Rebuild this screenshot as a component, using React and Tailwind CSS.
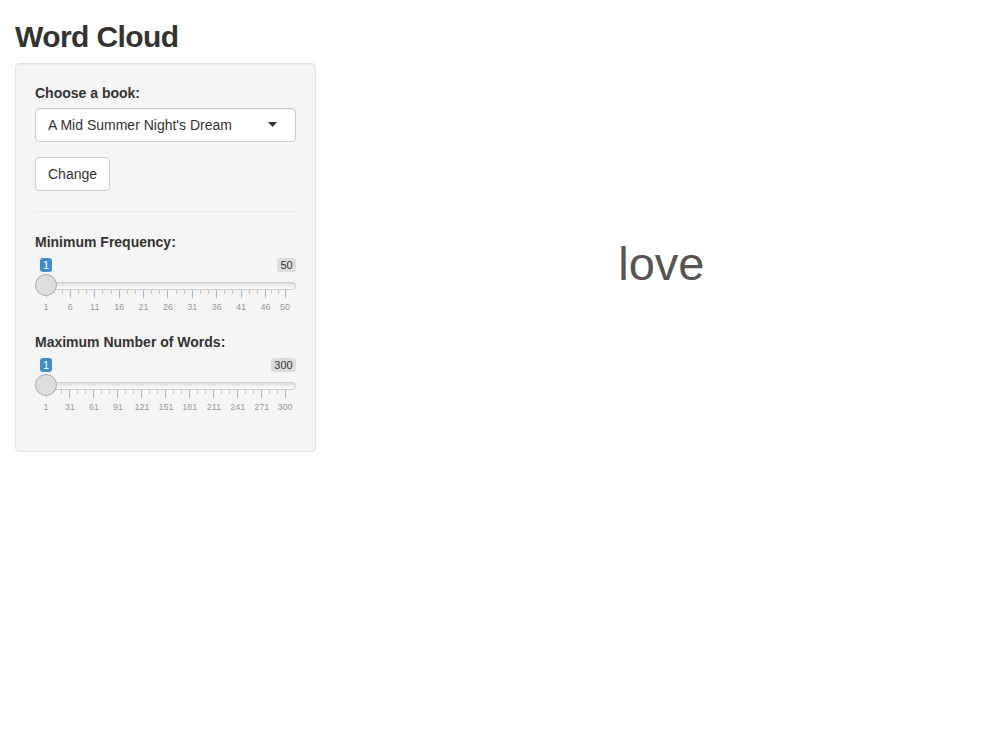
import { useMemo } from "react";

const FONT = { fontFamily: '"Liberation Sans", Arial, Helvetica, sans-serif' };

// handle centre runs from 11px to 250px inside the 261px slider
const TRACK_START = 11;
const TRACK_LEN = 239;

const Slider = ({ min, max, step }) => {
  const pos = (v) => TRACK_START + ((v - min) / (max - min)) * TRACK_LEN;

  const { labels, ticks } = useMemo(() => {
    const vals = [];
    for (let v = min; v < max; v += step) vals.push(v);
    vals.push(max);
    const t = [];
    vals.forEach((v, i) => {
      t.push({ x: pos(v), big: true });
      if (i < vals.length - 1) {
        const a = pos(v);
        const b = pos(vals[i + 1]);
        t.push({ x: a + (b - a) / 3, big: false });
        t.push({ x: a + ((b - a) * 2) / 3, big: false });
      }
    });
    return { labels: vals, ticks: t };
  }, [min, max, step]);

  return (
    <div className="flex h-[60px] flex-col">
      {/* value + max badges */}
      <div className="flex h-[17px] items-start justify-between pt-[1px] text-[11px] leading-[14px]">
        <span className="ml-[5px] rounded-[3px] bg-[#428bca] px-[3px] text-white">
          {min}
        </span>
        <span className="rounded-[3px] bg-[#dcdcdc] px-[3px] text-[#333]">
          {max}
        </span>
      </div>

      {/* track + handle */}
      <div className="relative flex h-[22px] items-center">
        <div className="mt-[2px] h-[8px] w-full rounded-full border border-[#cccccc] bg-gradient-to-b from-[#dedede] to-white" />
        <div
          className="absolute top-0 z-10 h-[22px] w-[22px] rounded-full border border-[#aaaaaa] bg-[#dedede] shadow-[1px_1px_3px_rgba(255,255,255,0.3)]"
          style={{ left: pos(min) - 11 }}
        />
      </div>

      {/* grid */}
      <div className="relative -mt-[6px] h-[27px]">
        {ticks.map((t, i) => (
          <span
            key={i}
            className={
              t.big
                ? "absolute top-0 h-[8px] w-px bg-[#428bca] opacity-50"
                : "absolute top-0 h-[4px] w-px bg-[#999] opacity-50"
            }
            style={{ left: t.x - 0.5 }}
          />
        ))}
        {labels.map((v) => (
          <span
            key={v}
            className="absolute top-[13px] -translate-x-1/2 whitespace-nowrap text-[9px] leading-[9px] text-[#999]"
            style={{ left: pos(v) }}
          >
            {v}
          </span>
        ))}
      </div>
    </div>
  );
};

const Label = ({ children }) => (
  <div className="mb-[5px] text-[14px] font-bold leading-[20px] text-[#333]">
    {children}
  </div>
);

const App = () => {
  return (
    <div className="min-h-screen bg-white px-[15px] text-[#333]" style={FONT}>
      <h2 className="mb-[10px] mt-[20px] text-[30px] font-bold leading-[33px] tracking-[-0.6px] text-[#333]">
        Word Cloud
      </h2>

      <div className="-mx-[15px] flex">
        {/* Sidebar */}
        <div className="w-1/3 px-[15px]">
          <div className="flex flex-col items-stretch rounded-[4px] border border-[#e3e3e3] bg-[#f5f5f5] p-[19px] shadow-[inset_0_1px_1px_rgba(0,0,0,0.05)]">
            <div className="mb-[15px]">
              <Label>Choose a book:</Label>
              <div className="flex h-[34px] items-center justify-between rounded-[4px] border border-[#cccccc] bg-white pl-[12px] pr-[18px] text-[14px] leading-[20px] text-[#333] shadow-[inset_0_1px_1px_rgba(0,0,0,0.075)]">
                <span>A Mid Summer Night's Dream</span>
                <svg width="9" height="5" viewBox="0 0 9 5" className="mt-[-2px]">
                  <path d="M0 0 L9 0 L4.5 5 Z" fill="#333" />
                </svg>
              </div>
            </div>

            <button className="h-[34px] self-start rounded-[4px] border border-[#cccccc] bg-white px-[12px] text-[14px] leading-[20px] text-[#333]">
              Change
            </button>

            <div className="my-[20px] border-t border-[#eaeaea]" />

            <div className="mb-[15px]">
              <Label>Minimum Frequency:</Label>
              <Slider min={1} max={50} step={5} />
            </div>

            <div className="mb-[15px]">
              <Label>Maximum Number of Words:</Label>
              <Slider min={1} max={300} step={30} />
            </div>
          </div>
        </div>

        {/* Plot */}
        <div className="w-2/3 px-[15px]">
          <div className="flex h-[400px] items-center justify-center">
            <span className="text-[47px] leading-none text-[#555]">love</span>
          </div>
        </div>
      </div>
    </div>
  );
};

export default App;
